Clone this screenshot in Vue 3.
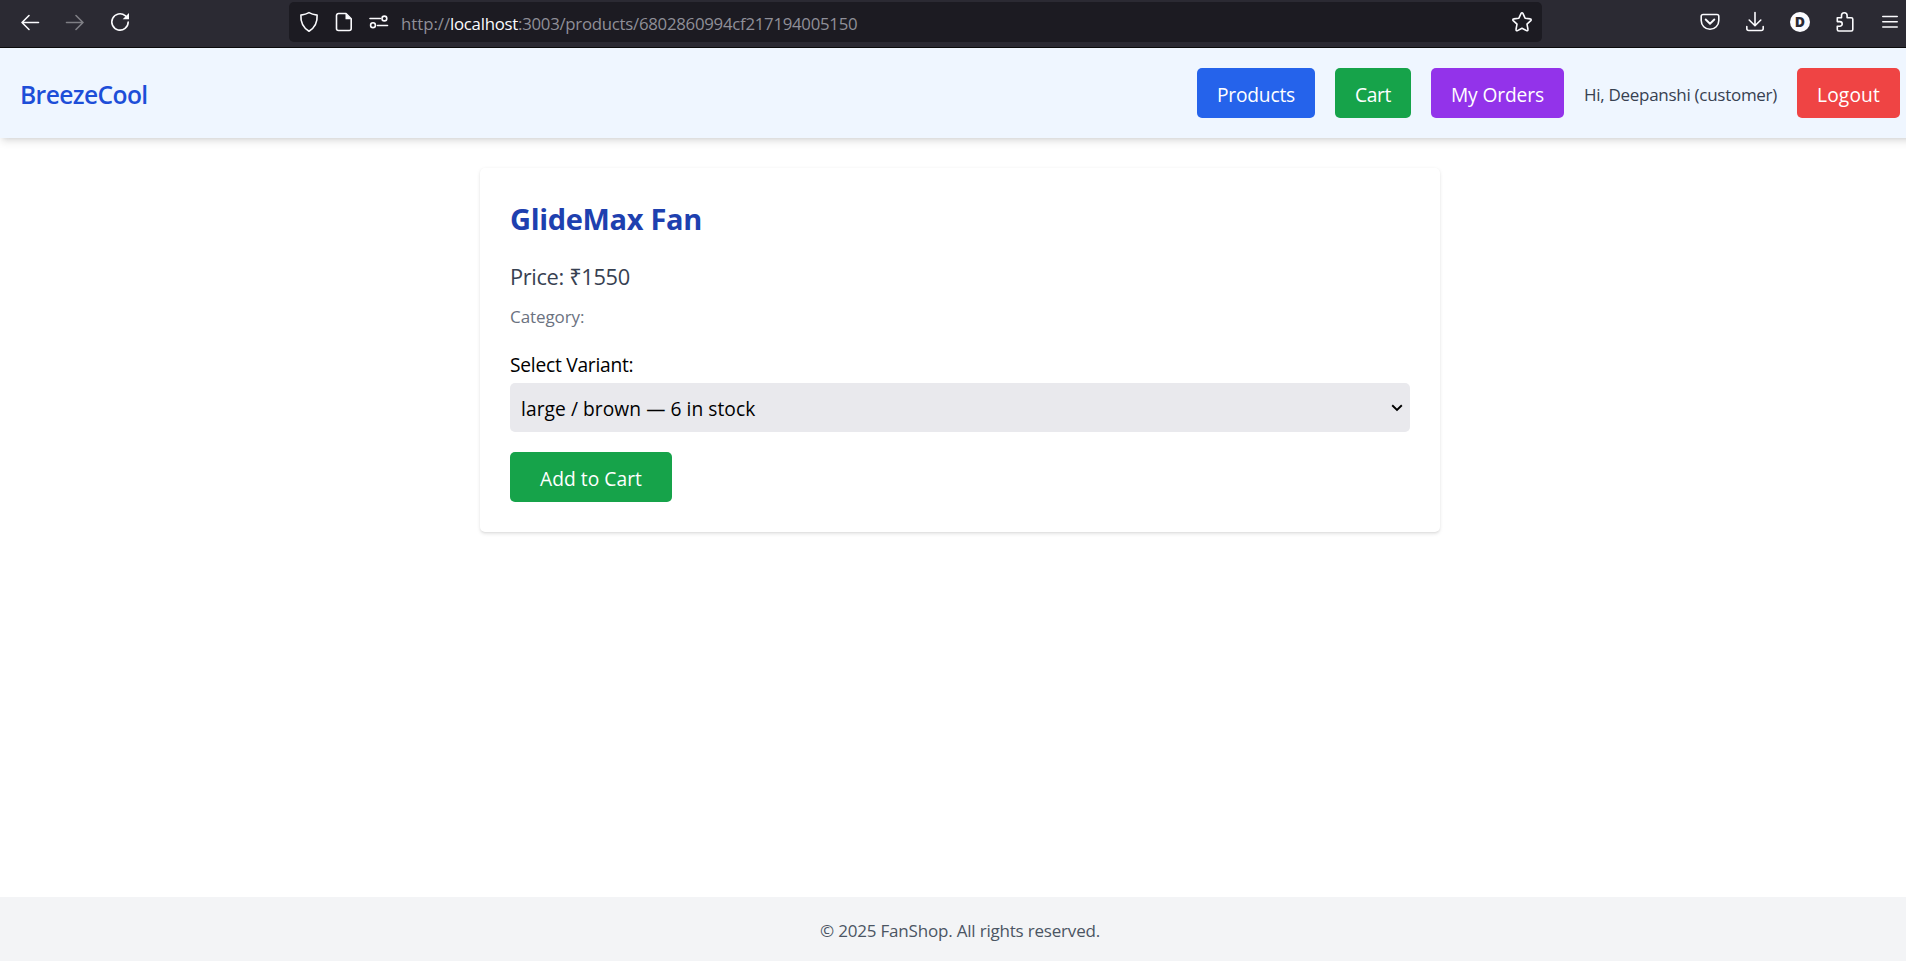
<script setup>
import { ref } from 'vue'

const variants = ['large / brown — 6 in stock']
const selected = ref(variants[0])
</script>

<template>
  <div class="window">
    <div class="toolbar">
      <div class="nav-icons">
        <svg class="ic" width="20" height="20" viewBox="0 0 20 20"><path d="M18.5 10.5H2M9 3.5l-7 7 7 7" /></svg>
        <svg class="ic dim" width="20" height="20" viewBox="0 0 20 20"><path d="M1.5 10.5H18M11 3.5l7 7-7 7" /></svg>
        <svg class="ic" width="20" height="20" viewBox="0 0 20 20"><path d="M18.2 10a8.2 8.2 0 1 1-3-6.4l1.5 1.4" /><path class="fill" d="M19 1v6.3h-6.3z" /></svg>
      </div>
      <div class="urlbar">
        <svg class="ic shield" width="20" height="22" viewBox="0 0 20 22"><path d="M10 1.6C7.6 3 4.6 3.7 1.9 4.1c-.4 6.4 1.6 12.2 8.1 16.1 6.5-3.9 8.5-9.7 8.1-16.1C15.4 3.7 12.4 3 10 1.6z" /></svg>
        <svg class="ic doc" width="18" height="20" viewBox="0 0 18 20"><path d="M3.5 1.5h7.5l5.2 5.2v9.8a2 2 0 0 1-2 2H3.5a2 2 0 0 1-2-2V3.5a2 2 0 0 1 2-2z" /><path class="fill" d="M10.5 1.5v5.7h5.7z" /></svg>
        <svg class="ic perms" width="20" height="14" viewBox="0 0 20 14"><path d="M1 3.5h10.5M8.5 10.5H18.5" /><circle cx="15.4" cy="3.5" r="2.4" /><circle cx="4" cy="10.2" r="2.4" /></svg>
        <div class="url"><span class="scheme">http://</span><span class="host">localhost</span><span class="path">:3003/products/6802860994cf217194005150</span></div>
        <svg class="ic star" width="22" height="22" viewBox="0 0 22 22"><path d="M11 1.8c.4 0 .7.2.9.6l2.2 4.8 5.1.7c.9.1 1.2 1.1.6 1.7l-3.8 3.6 1 5.3c.2.9-.7 1.5-1.5 1.1L11 17.2l-4.5 2.4c-.8.4-1.7-.2-1.5-1.1l1-5.3-3.8-3.6c-.6-.6-.3-1.6.6-1.7l5.1-.7 2.2-4.8c.2-.4.5-.6.9-.6z" /></svg>
      </div>
      <div class="actions">
        <svg class="ic pocket" width="20" height="18" viewBox="0 0 20 18"><path d="M3 1.5h14a1.8 1.8 0 0 1 1.8 1.8v4.2a8.8 8.8 0 0 1-17.6 0V3.3A1.8 1.8 0 0 1 3 1.5z" /><path class="bold" d="M5.7 6.5L10 10.7l4.3-4.2" /></svg>
        <svg class="ic" width="20" height="22" viewBox="0 0 20 22"><path d="M10 1.5v13M4.2 9l5.8 5.7L15.8 9M1.8 15.5v2a2 2 0 0 0 2 2h12.4a2 2 0 0 0 2-2v-2" /></svg>
        <span class="avatar">D</span>
        <svg class="ic" width="20" height="22" viewBox="0 0 20 22"><path d="M2.3 6.8h4.2V4.6a2.8 2.8 0 0 1 5.6 0v2.2h4.2a1.5 1.5 0 0 1 1.5 1.5v10.2a1.5 1.5 0 0 1-1.5 1.5H3.8a1.5 1.5 0 0 1-1.5-1.5v-3.3h2.6a2.3 2.3 0 0 0 0-4.6H2.3z" /></svg>
        <svg class="ic" width="16" height="16" viewBox="0 0 16 16"><path d="M.8 2.5h14.4M.8 7.7h14.4M.8 13h14.4" /></svg>
      </div>
    </div>

    <div class="page">
      <header class="header">
        <h1 class="brand">BreezeCool</h1>
        <nav class="nav">
          <a class="btn products"><span>Products</span></a>
          <a class="btn cart"><span>Cart</span></a>
          <a class="btn orders"><span>My Orders</span></a>
          <span class="greeting">Hi, Deepanshi (customer)</span>
          <button class="btn logout"><span>Logout</span></button>
        </nav>
      </header>

      <main class="main">
        <section class="card">
          <h2 class="title">GlideMax Fan</h2>
          <p class="price">Price: ₹1550</p>
          <p class="category">Category:</p>
          <label class="label" for="variant">Select Variant:</label>
          <div class="select-wrap">
            <select id="variant" v-model="selected" class="select">
              <option v-for="v in variants" :key="v" :value="v">{{ v }}</option>
            </select>
            <svg class="chevron" width="12" height="8" viewBox="0 0 12 8"><path d="M1.2 1.2L6 5.9l4.8-4.7" /></svg>
          </div>
          <button class="btn add"><span>Add to Cart</span></button>
        </section>
      </main>

      <footer class="footer">© 2025 FanShop. All rights reserved.</footer>
    </div>
  </div>
</template>

<style>
body { background: #fff; overflow: hidden; }
</style>

<style scoped>
.window {
  width: 100%;
  height: 100vh;
  overflow: hidden;
  display: flex;
  flex-direction: column;
  font-family: "Open Sans", "Noto Sans", sans-serif;
  font-size: 19.2px;
  line-height: 30px;
}
.window *, .window { box-sizing: border-box; }
h1, h2, p { margin: 0; }

/* browser toolbar */
.toolbar {
  height: 48px;
  flex: none;
  display: flex;
  align-items: flex-start;
  background: #2b2a33;
  border-bottom: 1px solid #0c0c0d;
}
.ic { flex: none; fill: none; stroke: #fbfbfe; stroke-width: 1.6; stroke-linecap: round; stroke-linejoin: round; }
.ic .fill { fill: #fbfbfe; stroke: none; }
.ic .bold { stroke-width: 1.9; }
.dim { opacity: 0.4; }
.nav-icons { width: 289px; padding: 12px 0 0 20px; display: flex; gap: 25px; }
.urlbar {
  width: 1253px;
  height: 40px;
  margin-top: 2px;
  padding: 0 9px 0 10px;
  display: flex;
  align-items: center;
  background: #1c1b22;
  border-radius: 5px;
}
.doc { margin-left: 16px; }
.perms { margin-left: 16px; }
.url { flex: 1; margin-left: 12px; padding-top: 4px; font-size: 16.8px; line-height: 24px; color: #8f8f98; white-space: nowrap; }
.scheme { letter-spacing: -0.034px; }
.host { color: #fbfbfe; letter-spacing: -0.255px; }
.path { letter-spacing: -0.265px; }
.actions { flex: 1; height: 44px; padding-left: 158px; display: flex; align-items: center; gap: 25px; }
.actions .ic:last-child { margin-left: 2px; }
.avatar {
  width: 20px;
  height: 20px;
  border-radius: 50%;
  background: #fbfbfe;
  color: #2b2a33;
  font-size: 14px;
  font-weight: 800;
  line-height: 20px;
  text-align: center;
}

/* the shop page is laid out at its full 1920px width */
.page { width: 1920px; flex: 1; display: flex; flex-direction: column; }
.header {
  height: 90px;
  flex: none;
  padding: 20px;
  display: flex;
  align-items: center;
  justify-content: space-between;
  background: #eff6ff;
  box-shadow: 0 5px 7.5px -1.25px rgba(0, 0, 0, 0.1), 0 2.5px 5px -2.5px rgba(0, 0, 0, 0.1);
}
.brand { font-size: 24.6px; font-weight: 600; line-height: 35px; letter-spacing: -0.6px; color: #1d4ed8; padding-top: 3px; }
.nav { display: flex; align-items: center; gap: 20px; }
.btn {
  height: 50px;
  padding: 0;
  border: 0;
  border-radius: 5px;
  display: flex;
  align-items: center;
  justify-content: center;
  color: #fff;
  font: inherit;
  white-space: nowrap;
}
.btn span { padding-top: 3px; }
.products { width: 118px; background: #2563eb; letter-spacing: -0.201px; }
.cart { width: 76px; background: #16a34a; letter-spacing: -0.357px; }
.orders { width: 133px; background: #9333ea; letter-spacing: -0.124px; }
.greeting { width: 193px; padding-top: 2px; font-size: 17px; line-height: 25px; letter-spacing: -0.283px; color: #374151; white-space: nowrap; }
.logout { width: 103px; background: #ef4444; letter-spacing: 0.146px; }

.main { flex: 1; padding-top: 30px; }
.card {
  width: 960px;
  margin: 0 auto;
  padding: 30px;
  background: #fff;
  border-radius: 5px;
  box-shadow: 0 1.25px 3.75px rgba(0, 0, 0, 0.1), 0 1.25px 2.5px -1.25px rgba(0, 0, 0, 0.1);
}
.title { margin-bottom: 20px; padding-top: 1px; height: 40px; font-size: 29px; font-weight: 700; line-height: 40px; letter-spacing: -0.32px; color: #1e40af; }
.price { height: 35px; padding-top: 1px; font-size: 21.8px; line-height: 35px; letter-spacing: -0.34px; color: #374151; }
.category { height: 25px; margin: 10px 0 20px; padding-top: 1px; font-size: 17px; line-height: 25px; letter-spacing: -0.08px; color: #6b7280; }
.label { display: block; height: 30px; margin-bottom: 5px; padding-top: 2px; letter-spacing: -0.24px; color: #000; }
.select-wrap { position: relative; height: 49px; margin-bottom: 20px; }
.select {
  display: block;
  width: 100%;
  height: 49px;
  padding: 3px 11px 0;
  appearance: none;
  border: 0;
  border-radius: 5px;
  background: #e9e9ed;
  color: #000;
  font: inherit;
  letter-spacing: 0.06px;
}
.chevron { position: absolute; right: 7px; top: 21px; fill: none; stroke: #000; stroke-width: 1.9; }
.add { width: 162px; background: #16a34a; letter-spacing: 0.055px; }

.footer {
  height: 64px;
  flex: none;
  padding-top: 21px;
  background: #f3f4f6;
  color: #4b5563;
  font-size: 17px;
  line-height: 25px;
  letter-spacing: -0.194px;
  text-align: center;
}
</style>
